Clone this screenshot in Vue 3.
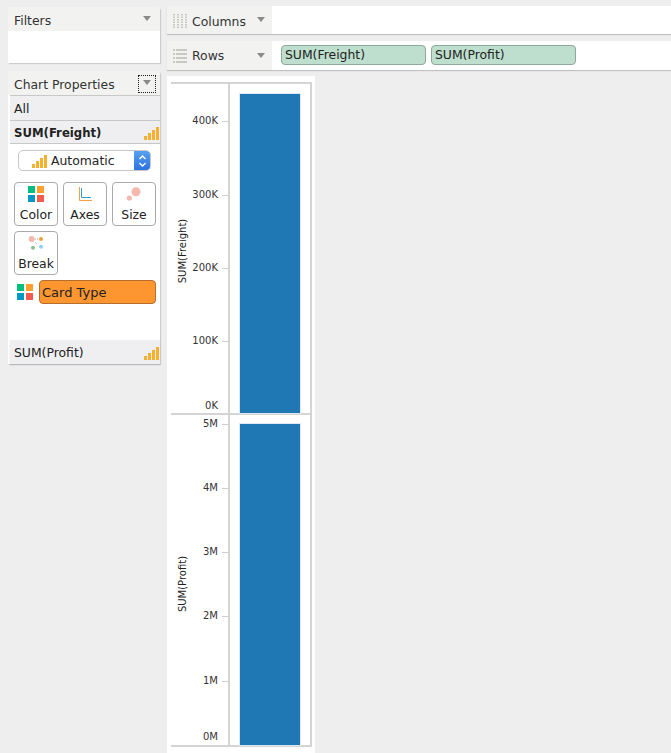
<script setup>
const colorSquares = ['#00c07f', '#ff9f2e', '#0099c6', '#f45b4f']
const panes = [
  { id: 'f', title: 'SUM(Freight)', titleY: 167, height: 329, barTop: 10, barHeight: 319, ticks: [
    { label: '400K', y: 31, mark: true }, { label: '300K', y: 105, mark: true }, { label: '200K', y: 178, mark: true }, { label: '100K', y: 251, mark: true }, { label: '0K', y: 316, mark: false } ] },
  { id: 'p', title: 'SUM(Profit)', titleY: 169, height: 330, barTop: 9, barHeight: 321, ticks: [
    { label: '5M', y: 3, mark: true }, { label: '4M', y: 67, mark: true }, { label: '3M', y: 131, mark: true }, { label: '2M', y: 195, mark: true }, { label: '1M', y: 260, mark: true }, { label: '0M', y: 316, mark: false } ] }
]
const bars = [4, 7, 10, 13]
</script>

<template>
  <div class="page">
    <aside class="left">
      <section class="card filters">
        <header class="card-head"><span>Filters</span><i class="caret"></i></header>
        <div class="filters-body"></div>
      </section>
      <section class="card props">
        <header class="card-head props-head">
          <span>Chart Properties</span>
          <span class="focus"><i class="caret"></i></span>
        </header>
        <div class="row all">All</div>
        <div class="row bold">
          <span>SUM(Freight)</span>
          <svg class="sig" width="15" height="14" viewBox="0 0 15 14"><rect v-for="(h, i) in bars" :key="i" :x="i * 4" :y="14 - h" width="3" :height="h" fill="#f7b02e" /></svg>
        </div>
        <div class="select-wrap">
          <div class="select">
            <svg class="sig" width="15" height="14" viewBox="0 0 15 14"><rect v-for="(h, i) in bars" :key="i" :x="i * 4" :y="14 - h" width="3" :height="h" fill="#f7b02e" /></svg>
            <span>Automatic</span>
            <span class="stepper">
              <svg width="9" height="16" viewBox="0 0 9 16"><path d="M1.5 6 4.5 3 7.5 6M1.5 10 4.5 13 7.5 10" fill="none" stroke="#fff" stroke-width="1.4" /></svg>
            </span>
          </div>
        </div>
        <div class="marks">
          <button class="mark">
            <span class="mark-icon">
              <span class="squares"><i v-for="c in colorSquares" :key="c" :style="{ background: c }"></i></span>
            </span>
            Color
          </button>
          <button class="mark">
            <span class="mark-icon">
              <svg width="14" height="14" viewBox="0 0 14 14"><path d="M1.5 0V13.5H14" fill="none" stroke="#f5a040" stroke-width="1" /><path d="M3.5 1V10.5H13" fill="none" stroke="#2f9fd0" stroke-width="1" /></svg>
            </span>
            Axes
          </button>
          <button class="mark">
            <span class="mark-icon">
              <svg width="18" height="16" viewBox="0 0 18 16"><circle cx="11" cy="5.7" r="4.5" fill="#f5b8ae" /><circle cx="4.3" cy="12" r="2.6" fill="#f5b8ae" /></svg>
            </span>
            Size
          </button>
          <button class="mark">
            <span class="mark-icon">
              <svg width="16" height="16" viewBox="0 0 16 16">
                <path d="M7 4H10M7 7 9 9" stroke="#aaa" stroke-width="1" stroke-dasharray="1 1" fill="none" />
                <circle cx="3.7" cy="4" r="3" fill="#f5b8ae" /><circle cx="13" cy="4" r="2" fill="#f5a040" /><circle cx="5" cy="12.7" r="2" fill="#8dc08d" /><circle cx="13" cy="11.7" r="2" fill="#8fd0f0" />
              </svg>
            </span>
            Break
          </button>
        </div>
        <div class="field">
          <span class="squares"><i v-for="c in colorSquares" :key="c" :style="{ background: c }"></i></span>
          <div class="pill">Card Type</div>
        </div>
        <div class="spacer"></div>
        <div class="row last">
          <span>SUM(Profit)</span>
          <svg class="sig" width="15" height="14" viewBox="0 0 15 14"><rect v-for="(h, i) in bars" :key="i" :x="i * 4" :y="14 - h" width="3" :height="h" fill="#f7b02e" /></svg>
        </div>
      </section>
    </aside>

    <main class="main">
      <div class="shelf columns">
        <div class="shelf-head">
          <svg width="14" height="14" viewBox="0 0 14 14"><path d="M1 0V14M5 0V14M9 0V14M13 0V14" stroke="#c8c8c4" stroke-width="2" stroke-dasharray="1.5 1" fill="none" /></svg>
          <span class="shelf-label">Columns</span>
          <i class="caret"></i>
        </div>
        <div class="shelf-body"></div>
      </div>
      <div class="shelf rows">
        <div class="shelf-head">
          <svg width="14" height="14" viewBox="0 0 14 14"><path d="M0 1H14M0 5H14M0 9H14M0 13H14" stroke="#c8c8c4" stroke-width="2" stroke-dasharray="2 1 11" fill="none" /></svg>
          <span class="shelf-label">Rows</span>
          <i class="caret"></i>
        </div>
        <div class="shelf-body pills">
          <div class="green first">SUM(Freight)</div>
          <div class="green second">SUM(Profit)</div>
        </div>
      </div>
      <div class="chart">
        <div class="frame">
          <div v-for="p in panes" :key="p.id" class="pane" :style="{ height: p.height + 'px' }">
            <div class="axis">
              <span class="axis-title" :style="{ top: p.titleY + 'px' }">{{ p.title }}</span>
              <span v-for="t in p.ticks" :key="t.label" class="tick" :class="{ marked: t.mark }" :style="{ top: t.y + 'px' }">{{ t.label }}</span>
            </div>
            <div class="plot">
              <div class="bar" :style="{ marginTop: p.barTop + 'px', height: p.barHeight + 'px' }"></div>
            </div>
          </div>
        </div>
      </div>
    </main>
  </div>
</template>

<style>
html, body { margin: 0; background: #eeeeee; }
</style>

<style scoped>
.page {
  width: 671px;
  height: 753px;
  overflow: hidden;
  display: flex;
  background: #eeeeee;
  font-family: "DejaVu Sans", sans-serif;
  font-size: 12.4px;
  color: #222;
  box-sizing: border-box;
}
.left {
  width: 152px;
  margin-left: 8px;
  padding-top: 7px;
  display: flex;
  flex-direction: column;
  gap: 8px;
  flex: none;
}
.card {
  background: #fff;
  border-radius: 3px 3px 0 0;
  box-shadow: 1px 1px 1px #c8c8c8;
  box-sizing: border-box;
}
.card-head {
  height: 24px;
  background: #f2f2f0;
  display: flex;
  align-items: center;
  justify-content: space-between;
  padding: 2px 9px 0 6px;
  box-sizing: border-box;
  border-radius: 3px 3px 0 0;
  color: #333;
}
.caret {
  display: block;
  width: 0;
  height: 0;
  border-left: 4px solid transparent;
  border-right: 4px solid transparent;
  border-top: 5px solid #8a8a8a;
}
.card-head .caret { margin-top: -4px; }
.filters-body { height: 32px; }
.props { height: 293px; display: flex; flex-direction: column; }
.props-head { padding-right: 4px; }
.focus {
  width: 18px;
  height: 18px;
  border: 1px dotted #222;
  box-sizing: border-box;
  display: flex;
  align-items: center;
  justify-content: center;
}
.row {
  margin-left: 2px;
  height: 24px;
  background: #efeff1;
  border-top: 1px solid #d0d0d0;
  display: flex;
  align-items: center;
  justify-content: space-between;
  padding: 1px 1px 0 4px;
  box-sizing: border-box;
}
.row.all { border-top: 1px solid #c8c8c8; height: 25px; }
.row.bold { font-weight: 700; font-size: 11.7px; border-top: 1px solid #c8c8c8; border-bottom: 1px solid #c8c8c8; }
.row.last { border-top: none; height: 24px; box-shadow: 0 1px 1px #bbb; }
.select-wrap { padding: 6px 9px 0 10px; }
.select {
  height: 21px;
  border: 1px solid #c8c8c8;
  border-radius: 5px;
  display: flex;
  align-items: center;
  padding-left: 13px;
  gap: 4px;
  box-sizing: border-box;
  overflow: hidden;
}
.stepper {
  margin-left: auto;
  width: 16px;
  height: 21px;
  background: linear-gradient(#5ba4f0, #2a70e0);
  display: flex;
  align-items: center;
  justify-content: center;
}
.marks {
  display: grid;
  grid-template-columns: repeat(3, 44px);
  gap: 5px;
  padding: 11px 0 0 6px;
}
.mark {
  height: 44px;
  width: 44px;
  padding: 0;
  border: 1px solid #aaa;
  border-radius: 4px;
  background: #fff;
  font: inherit;
  color: #222;
  display: flex;
  flex-direction: column;
  align-items: center;
  box-sizing: border-box;
}
.mark-icon {
  height: 22px;
  margin-bottom: 2px;
  display: flex;
  align-items: center;
  justify-content: center;
  flex: none;
}
.squares {
  display: grid;
  grid-template-columns: 7px 7px;
  grid-auto-rows: 7px;
  gap: 2px;
  flex: none;
}
.squares i { display: block; }
.field {
  display: flex;
  align-items: center;
  gap: 6px;
  padding: 5px 4px 0 9px;
}
.pill {
  flex: 1;
  height: 24px;
  background: #fd9630;
  border: 1px solid #b56f2a;
  border-radius: 4px;
  box-sizing: border-box;
  display: flex;
  align-items: center;
  padding-left: 2px;
  font-size: 13px;
}
.spacer { flex: 1; }
.main { flex: 1; min-width: 0; padding-top: 6px; padding-left: 7px; }
.shelf {
  display: flex;
  background: #fff;
  box-shadow: 0 1px 1px #c0c0c0;
  box-sizing: border-box;
}
.columns { height: 28px; margin-bottom: 7px; }
.rows { height: 29px; }
.shelf-head {
  width: 105px;
  background: #f2f2f0;
  display: flex;
  align-items: center;
  padding-left: 6px;
  box-sizing: border-box;
  flex: none;
}
.columns .shelf-head { padding-top: 2px; }
.columns .caret { margin-top: -3px; }
.rows .caret { margin-top: -1px; }
.shelf-label { margin-left: 5px; color: #333; }
.shelf-head .caret { margin-left: auto; margin-right: 7px; }
.shelf-body { flex: 1; }
.pills { display: flex; align-items: center; gap: 5px; padding: 0 0 2px 9px; }
.green {
  height: 20px;
  background: #bedfcd;
  border: 1px solid #8fa89a;
  border-radius: 4px;
  box-sizing: border-box;
  display: flex;
  align-items: center;
  padding-left: 3px;
}
.first { width: 145px; }
.second { width: 145px; }
.chart {
  width: 148px;
  margin-top: 6px;
  height: 677px;
  background: #fff;
  padding: 6px 0 0 4px;
  box-sizing: border-box;
}
.frame {
  width: 139px;
  border-top: 2px solid #d4d4d4;
  border-right: 2px solid #d4d4d4;
  border-bottom: 2px solid #d4d4d4;
}
.pane { display: flex; }
.pane + .pane { border-top: 2px solid #d4d4d4; }
.axis {
  width: 57px;
  position: relative;
  border-right: 2px solid #d4d4d4;
  flex: none;
}
.axis-title {
  position: absolute;
  left: 11px;
  font-size: 10px;
  white-space: nowrap;
  transform: translate(-50%, -50%) rotate(-90deg);
}
.tick {
  position: absolute;
  right: 10px;
  font-size: 10px;
  line-height: 12px;
  color: #333;
}
.tick.marked::after {
  content: "";
  position: absolute;
  left: 100%;
  top: 6px;
  width: 6px;
  margin-left: 4px;
  height: 1px;
  background: #cfcfcf;
}
.plot { flex: 1; padding-left: 10px; }
.bar { width: 60px; background: #1f77b4; box-shadow: 0 0 0 1px #dbe9f6; }
</style>
